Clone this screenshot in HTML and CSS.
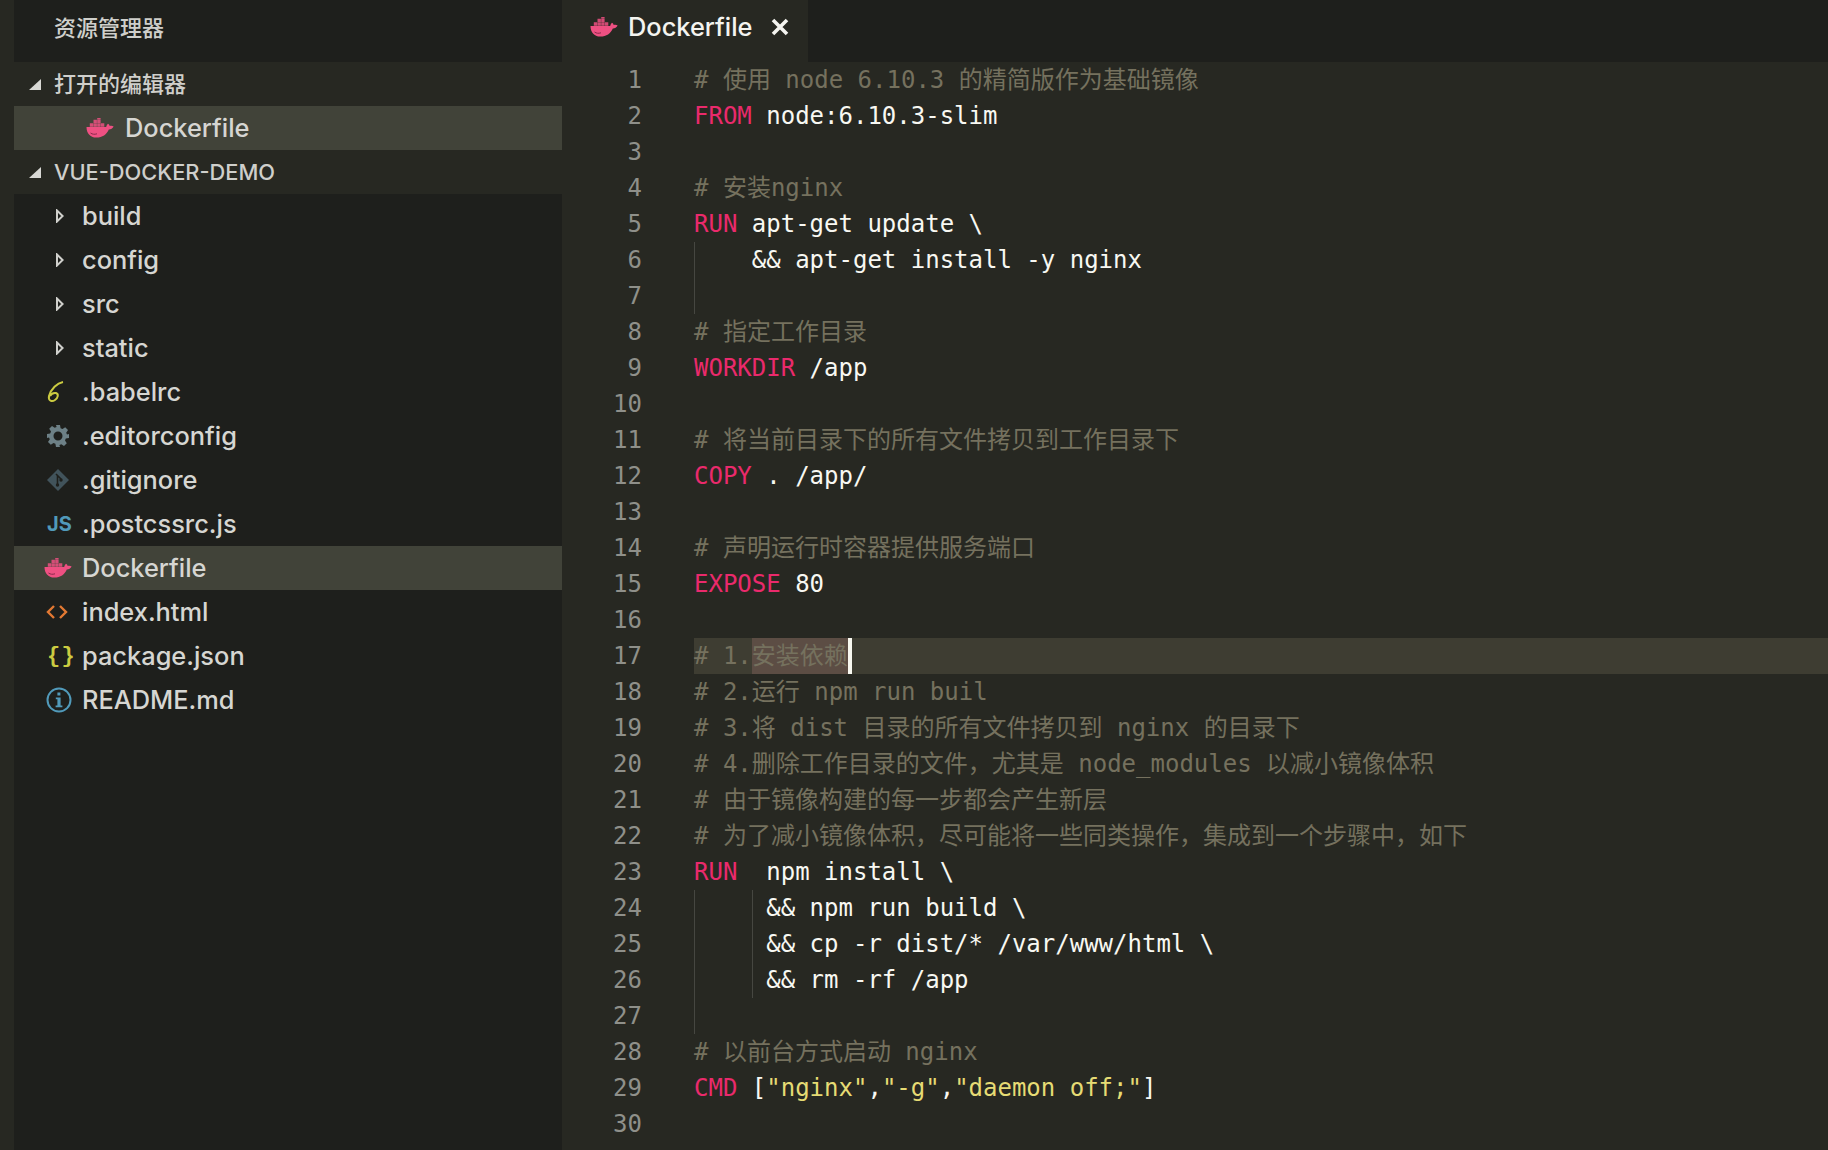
FILE: index.html
```html
<!DOCTYPE html>
<html lang="zh-CN">

<head>
  <meta charset="UTF-8" />
  <title>Dockerfile - vue-docker-demo</title>
  <link rel="stylesheet" href="styles.css">
</head>

<body>
  <svg class="defs" width="0" height="0">
    <symbol id="whale" viewBox="0 0 28 20">
      <path fill="currentColor" d="M0.5 9H20.2C20.4 8 21 6.6 22 5.8C23 6.4 23.6 7.2 23.7 8.1C25 7.6 26.6 7.8 27.6 8.6C26.6 10.6 24.6 11.6 22.8 11.5C20.8 16.4 16.4 19.6 10.4 19.6C4 19.6 0.5 15 0.5 9Z" />
      <path fill="currentColor" opacity="0.85" d="M3.8 5.3h3.4v3.4h-3.4zM7.5 5.3h3.4v3.4h-3.4zM11.2 5.3h3.4v3.4h-3.4zM14.9 5.3h3.4v3.4h-3.4zM7.5 1.7h3.4v3.3h-3.4zM11.2 1.7h3.4v3.3h-3.4zM11.2 0h3.4v1.4h-3.4z" />
      <path fill="none" stroke="#8a2a4c" stroke-width="1" d="M4.5 15C6.5 16.4 8.5 16.6 11 15.8" />
    </symbol>
    <symbol id="open-arrow" viewBox="0 0 12 12">
      <path fill="#d8d8d4" d="M12 1V12H0Z" />
    </symbol>
    <symbol id="closed-arrow" viewBox="0 0 8 14">
      <path fill="none" stroke="#d0d0cc" stroke-width="2" d="M1 1.5V12.5L6.6 7Z" />
    </symbol>
  </svg>

  <div class="window">
    <div class="strip"></div>

    <aside class="sidebar">
      <div class="side-title">资源管理器</div>

      <div class="section">
        <svg class="sec-arrow"><use href="#open-arrow" /></svg>
        <span class="cjk-label">打开的编辑器</span>
      </div>
      <div class="row open-file active">
        <svg class="whale"><use href="#whale" /></svg>
        <span class="name">Dockerfile</span>
      </div>

      <div class="section">
        <svg class="sec-arrow"><use href="#open-arrow" /></svg>
        <span>VUE-DOCKER-DEMO</span>
      </div>

      <div class="row"><span class="ico"><svg class="arrow"><use href="#closed-arrow" /></svg></span><span class="name">build</span></div>
      <div class="row"><span class="ico"><svg class="arrow"><use href="#closed-arrow" /></svg></span><span class="name">config</span></div>
      <div class="row"><span class="ico"><svg class="arrow"><use href="#closed-arrow" /></svg></span><span class="name">src</span></div>
      <div class="row"><span class="ico"><svg class="arrow"><use href="#closed-arrow" /></svg></span><span class="name">static</span></div>
      <div class="row">
        <span class="ico">
          <svg width="20" height="24" viewBox="0 0 20 24">
            <path fill="none" stroke="#cbcb41" stroke-width="2" d="M17 2C11 3 5 9 3 16C2 21 6 22 9 20C12 18 13 14 10 13C7 12.5 5 14 4 16" />
          </svg>
        </span>
        <span class="name">.babelrc</span>
      </div>
      <div class="row">
        <span class="ico">
          <svg width="24" height="24" viewBox="0 0 24 24">
            <path fill="#6d8086" fill-rule="evenodd" d="M10 1h4l.6 3.2 1.9.8 2.7-1.8 2.8 2.8-1.8 2.7.8 1.9L23 10v4l-3.2.6-.8 1.9 1.8 2.7-2.8 2.8-2.7-1.8-1.9.8L14 23h-4l-.6-3.2-1.9-.8-2.7 1.8-2.8-2.8 1.8-2.7-.8-1.9L1 14v-4l3.2-.6.8-1.9-1.8-2.7 2.8-2.8 2.7 1.8 1.9-.8zM12 7.5a4.5 4.5 0 1 0 0 9 4.5 4.5 0 0 0 0-9z" />
          </svg>
        </span>
        <span class="name">.editorconfig</span>
      </div>
      <div class="row">
        <span class="ico">
          <svg width="24" height="24" viewBox="0 0 24 24">
            <path fill="#41535b" d="M12 1L23 12 12 23 1 12Z" />
            <path fill="none" stroke="#1e1f1c" stroke-width="1.6" d="M10 6L15 11M11.5 8V17" />
            <circle cx="11.5" cy="17" r="1.7" fill="#1e1f1c" />
            <circle cx="15" cy="12" r="1.7" fill="#1e1f1c" />
          </svg>
        </span>
        <span class="name">.gitignore</span>
      </div>
      <div class="row"><span class="ico js">JS</span><span class="name">.postcssrc.js</span></div>
      <div class="row active">
        <span class="ico"><svg class="whale"><use href="#whale" /></svg></span>
        <span class="name">Dockerfile</span>
      </div>
      <div class="row">
        <span class="ico">
          <svg width="22" height="16" viewBox="0 0 22 16">
            <path fill="none" stroke="#e37933" stroke-width="2.4" d="M8 2L2 8l6 6M14 2l6 6-6 6" />
          </svg>
        </span>
        <span class="name">index.html</span>
      </div>
      <div class="row"><span class="ico json">{ }</span><span class="name">package.json</span></div>
      <div class="row">
        <span class="ico">
          <svg width="26" height="26" viewBox="0 0 26 26">
            <circle cx="13" cy="13" r="11.5" fill="none" stroke="#519aba" stroke-width="2" />
            <path fill="#519aba" d="M11.4 5.5h3v3h-3zM9.8 10.5h4.8v8h1.8v1.8H9.6v-1.8h1.8v-6.2H9.8z" />
          </svg>
        </span>
        <span class="name">README.md</span>
      </div>
    </aside>

    <main class="editor">
      <div class="tabs">
        <div class="tab">
          <svg class="whale"><use href="#whale" /></svg>
          <span class="tab-name">Dockerfile</span>
          <svg class="close" width="18" height="18" viewBox="0 0 18 18">
            <path stroke="#f4f4f0" stroke-width="3.6" d="M2 2L16 16M16 2L2 16" />
          </svg>
        </div>
      </div>

      <div class="code">
        <div class="line"><span class="ln">1</span><span class="src c"># 使用 node 6.10.3 的精简版作为基础镜像</span></div>
        <div class="line"><span class="ln">2</span><span class="src"><b>FROM</b> node:6.10.3-slim</span></div>
        <div class="line"><span class="ln">3</span><span class="src"></span></div>
        <div class="line"><span class="ln">4</span><span class="src c"># 安装nginx</span></div>
        <div class="line"><span class="ln">5</span><span class="src"><b>RUN</b> apt-get update \</span></div>
        <div class="line"><span class="ln">6</span><span class="src guide1">    &amp;&amp; apt-get install -y nginx</span></div>
        <div class="line"><span class="ln">7</span><span class="src guide1"></span></div>
        <div class="line"><span class="ln">8</span><span class="src c"># 指定工作目录</span></div>
        <div class="line"><span class="ln">9</span><span class="src"><b>WORKDIR</b> /app</span></div>
        <div class="line"><span class="ln">10</span><span class="src"></span></div>
        <div class="line"><span class="ln">11</span><span class="src c"># 将当前目录下的所有文件拷贝到工作目录下</span></div>
        <div class="line"><span class="ln">12</span><span class="src"><b>COPY</b> . /app/</span></div>
        <div class="line"><span class="ln">13</span><span class="src"></span></div>
        <div class="line"><span class="ln">14</span><span class="src c"># 声明运行时容器提供服务端口</span></div>
        <div class="line"><span class="ln">15</span><span class="src"><b>EXPOSE</b> 80</span></div>
        <div class="line"><span class="ln">16</span><span class="src"></span></div>
        <div class="line"><span class="ln">17</span><span class="src c current"># 1.<span class="sel">安装依赖</span><span class="cursor"></span></span></div>
        <div class="line"><span class="ln">18</span><span class="src c"># 2.运行 npm run buil</span></div>
        <div class="line"><span class="ln">19</span><span class="src c"># 3.将 dist 目录的所有文件拷贝到 nginx 的目录下</span></div>
        <div class="line"><span class="ln">20</span><span class="src c"># 4.删除工作目录的文件，尤其是 node_modules 以减小镜像体积</span></div>
        <div class="line"><span class="ln">21</span><span class="src c"># 由于镜像构建的每一步都会产生新层</span></div>
        <div class="line"><span class="ln">22</span><span class="src c"># 为了减小镜像体积，尽可能将一些同类操作，集成到一个步骤中，如下</span></div>
        <div class="line"><span class="ln">23</span><span class="src"><b>RUN</b>  npm install \</span></div>
        <div class="line"><span class="ln">24</span><span class="src guide2">     &amp;&amp; npm run build \</span></div>
        <div class="line"><span class="ln">25</span><span class="src guide2">     &amp;&amp; cp -r dist/* /var/www/html \</span></div>
        <div class="line"><span class="ln">26</span><span class="src guide2">     &amp;&amp; rm -rf /app</span></div>
        <div class="line"><span class="ln">27</span><span class="src guide1"></span></div>
        <div class="line"><span class="ln">28</span><span class="src c"># 以前台方式启动 nginx</span></div>
        <div class="line"><span class="ln">29</span><span class="src"><b>CMD</b> [<i>"nginx"</i>,<i>"-g"</i>,<i>"daemon off;"</i>]</span></div>
        <div class="line"><span class="ln">30</span><span class="src"></span></div>
      </div>
    </main>
  </div>
</body>

</html>
```

FILE: styles.css
```css
* {
  box-sizing: border-box;
}

html,
body {
  margin: 0;
  height: 100%;
  overflow: hidden;
}

body {
  background: #272822;
  color: #d6d6d2;
  font-family: Inter, "Noto Sans CJK SC", sans-serif;
}

.defs {
  display: block;
  height: 0;
}

.window {
  display: flex;
  height: 1150px;
}

.strip {
  width: 14px;
  background: #272822;
}

/* sidebar */
.sidebar {
  width: 548px;
  background: #1e1f1c;
  font-size: 25.4px;
  font-weight: 500;
}

.side-title {
  height: 62px;
  padding: 0 0 10px 40px;
  display: flex;
  align-items: center;
  font-size: 22px;
  color: #cfcfcb;
}

.section {
  height: 44px;
  background: #272822;
  display: flex;
  align-items: center;
  font-size: 21.8px;
  color: #cfcfcb;
}

.sec-arrow {
  width: 12px;
  height: 12px;
  margin: 0 13px 0 15px;
}

.cjk-label {
  margin-bottom: 4px;
  font-size: 22px;
}

.row {
  height: 44px;
  display: flex;
  align-items: center;
  padding-left: 26px;
  white-space: nowrap;
}

.row.active {
  background: #414339;
}

.row.open-file {
  padding-left: 72px;
}

.row.open-file .whale {
  margin-right: 11px;
}

.name {
  margin-bottom: 2px;
}

.ico {
  width: 42px;
  display: flex;
  align-items: center;
  justify-content: flex-start;
  padding-left: 6px;
}

.whale {
  width: 28px;
  height: 20px;
  color: #ee5082;
  flex-shrink: 0;
}

.ico .whale {
  margin-left: -2px;
}

.arrow {
  width: 8px;
  height: 14px;
  margin-left: 10px;
}

.js {
  font: bold 20px Inter, sans-serif;
  color: #519aba;
  padding-left: 7px;
}

.json {
  font: bold 22px "Liberation Mono", monospace;
  letter-spacing: -6px;
  color: #cbcb41;
  padding-left: 7px;
}

/* editor */
.editor {
  flex: 1;
  min-width: 0;
  background: #272822;
}

.tabs {
  height: 62px;
  background: #1e1f1c;
  display: flex;
}

.tab {
  width: 246px;
  background: #272822;
  display: flex;
  align-items: center;
  padding: 0 0 8px 28px;
  font-size: 25.4px;
  font-weight: 500;
  color: #f4f4f0;
}

.tab-name {
  margin: 0 0 2px 10px;
}

.close {
  margin-left: 18px;
}

.code {
  font-family: "DejaVu Sans Mono", "Noto Sans CJK SC", monospace;
  font-size: 24px;
  line-height: 36px;
  color: #f8f8f2;
}

.line {
  display: flex;
  height: 36px;
}

.ln {
  width: 80px;
  text-align: right;
  color: #8f908a;
  flex-shrink: 0;
}

.src {
  flex: 1;
  margin-left: 52px;
  white-space: pre;
}

.src b {
  font-weight: normal;
  color: #ea2a6c;
}

.src i {
  font-style: normal;
  color: #e6db74;
}

.c {
  color: #75715e;
}

.current {
  background: #3e3d32;
  display: flex;
}

.sel {
  background: #5c4d44;
}

.cursor {
  width: 4px;
  height: 36px;
  background: #f8f8f0;
}

.guide1,
.guide2 {
  background-repeat: no-repeat;
  background-image: linear-gradient(#464741, #464741), linear-gradient(#464741, #464741);
  background-size: 1px 100%, 1px 100%;
}

.guide1 {
  background-position: 0 0, 0 0;
}

.guide2 {
  background-position: 0 0, 58px 0;
}
```
